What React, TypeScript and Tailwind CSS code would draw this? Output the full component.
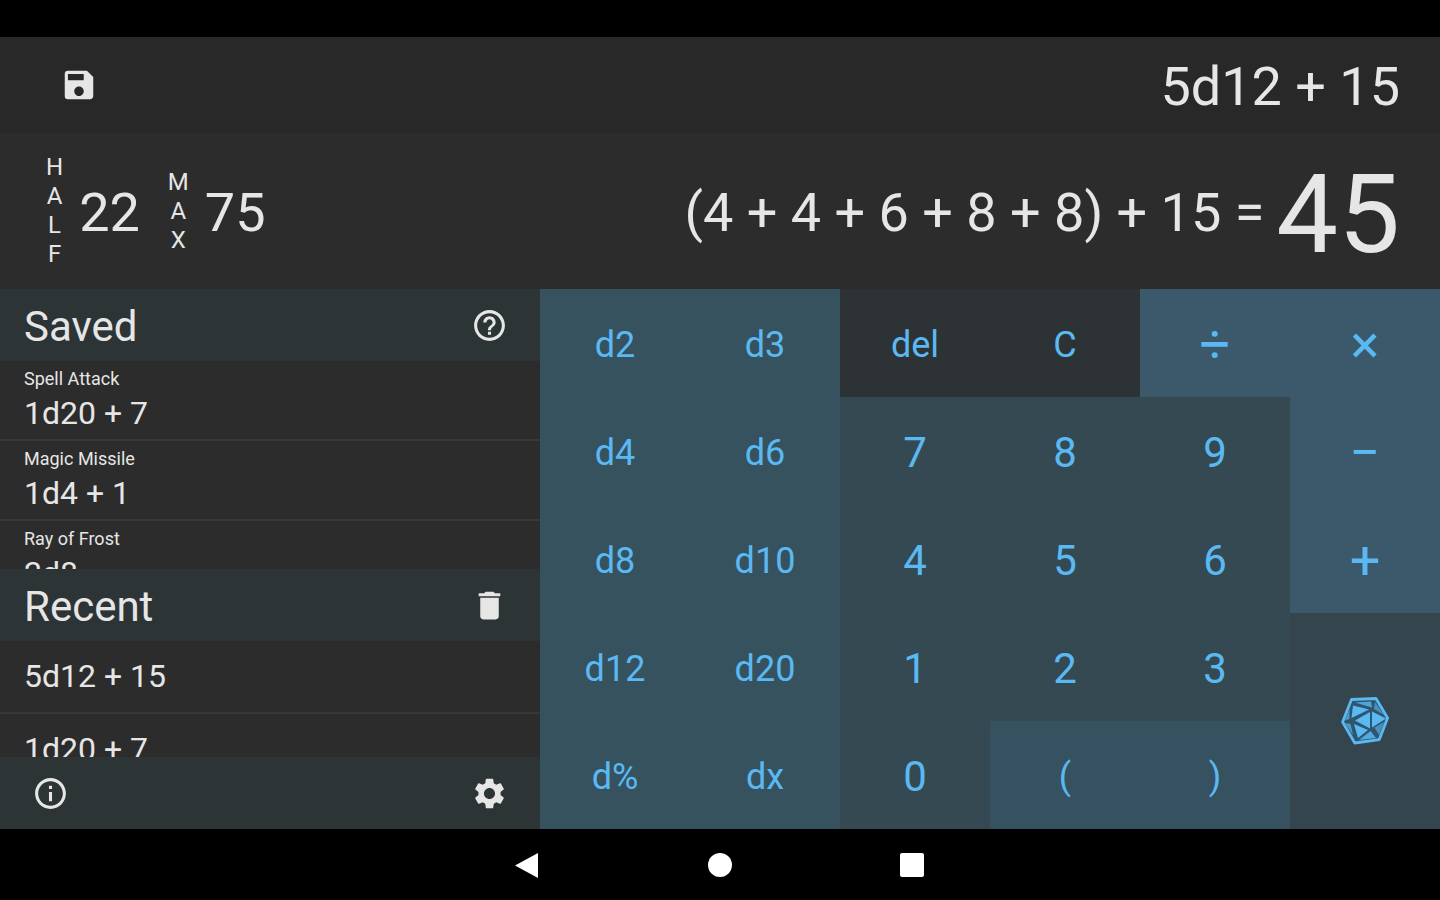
import { clsx } from 'clsx';
import { MdDelete, MdHelpOutline, MdInfoOutline, MdSave, MdSettings } from 'react-icons/md';

interface SavedRoll {
    name: string;
    formula: string;
}

interface Key {
    label: string;
    kind: 'die' | 'digit' | 'edit' | 'operator' | 'paren';
}

const savedRolls: SavedRoll[] = [
    { name: 'Spell Attack', formula: '1d20 + 7' },
    { name: 'Magic Missile', formula: '1d4 + 1' },
    { name: 'Ray of Frost', formula: '2d8' },
];

const recentRolls = ['5d12 + 15', '1d20 + 7'];

// Row by row; the roll button fills the last two cells of the right column
const keys: Key[] = [
    { label: 'd2', kind: 'die' },
    { label: 'd3', kind: 'die' },
    { label: 'del', kind: 'edit' },
    { label: 'C', kind: 'edit' },
    { label: '÷', kind: 'operator' },
    { label: '×', kind: 'operator' },
    { label: 'd4', kind: 'die' },
    { label: 'd6', kind: 'die' },
    { label: '7', kind: 'digit' },
    { label: '8', kind: 'digit' },
    { label: '9', kind: 'digit' },
    { label: '−', kind: 'operator' },
    { label: 'd8', kind: 'die' },
    { label: 'd10', kind: 'die' },
    { label: '4', kind: 'digit' },
    { label: '5', kind: 'digit' },
    { label: '6', kind: 'digit' },
    { label: '+', kind: 'operator' },
    { label: 'd12', kind: 'die' },
    { label: 'd20', kind: 'die' },
    { label: '1', kind: 'digit' },
    { label: '2', kind: 'digit' },
    { label: '3', kind: 'digit' },
    { label: 'd%', kind: 'die' },
    { label: 'dx', kind: 'die' },
    { label: '0', kind: 'digit' },
    { label: '(', kind: 'paren' },
    { label: ')', kind: 'paren' },
];

const keyStyles: Record<Key['kind'], string> = {
    die: 'bg-[#37525f] text-4xl',
    digit: 'bg-[#344952] text-[42px]',
    edit: 'bg-[#2d3335] text-4xl',
    operator: 'bg-[#3b596a] text-[54px]',
    paren: 'bg-[#365160] text-4xl',
};

function D20Icon() {
    return (
        <svg className="h-12 w-12" viewBox="0 0 48 48" fill="currentColor" aria-hidden="true">
            <path
                d="M10.5 2.5 L35 1.5 L46.6 21 L38.3 42.6 L13.8 46 L1.6 25 Z"
                fill="#2f566d"
                stroke="currentColor"
                strokeWidth="2.8"
                strokeLinejoin="round"
            />
            <path d="M12 8.5 L28 12.5 L10.500 21 Z" />
            <path d="M14 23.500 L29 15 L29 31.500 Z" />
            <path d="M31 14.500 L45 21.500 L31 30.500 Z" />
            <path d="M13 27 L27 33 L17 41 Z" />
            <path d="M14 5.500 L30 4.500 L31 10.500 Z" opacity="0.8" />
            <path d="M18 43 L29.500 34 L35 41 Z" opacity="0.85" />
            <path d="M34 5 L43 18 L33 12 Z" opacity="0.6" />
            <path d="M43 25 L38 38 L33.500 30.500 Z" opacity="0.6" />
            <path d="M8.500 12 L8.500 22 L4 23.500 Z M4 26 L9.500 27 L12 38 Z" opacity="0.7" />
        </svg>
    );
}

function Stat({ label, value }: { label: string; value: string }) {
    return (
        <div className="flex items-center gap-4">
            <div className="flex flex-col items-center text-2xl leading-[29px]">
                {label.split('').map((letter, i) => (
                    <span key={i}>{letter}</span>
                ))}
            </div>
            <span className="pt-1 text-[54px] leading-none">{value}</span>
        </div>
    );
}

function Sidebar() {
    return (
        <aside className="flex min-h-0 w-3/8 flex-col">
            <div className="flex h-18 shrink-0 items-center justify-between bg-[#2d3436] pr-8 pl-6">
                <h2 className="pt-1 text-[42px] leading-none">Saved</h2>
                <button aria-label="Help">
                    <MdHelpOutline size={37} />
                </button>
            </div>
            <ul className="min-h-0 flex-9 overflow-hidden">
                {savedRolls.map((roll) => (
                    <li key={roll.name} className="border-b-2 border-[#383838]">
                        <button className="block w-full px-6 pt-1.5 pb-1 text-left">
                            <span className="block text-lg leading-6">{roll.name}</span>
                            <span className="block text-[32px] leading-11">{roll.formula}</span>
                        </button>
                    </li>
                ))}
            </ul>

            <div className="flex h-18 shrink-0 items-center justify-between bg-[#2d3436] pr-8 pl-6">
                <h2 className="pt-1 text-[42px] leading-none">Recent</h2>
                <button aria-label="Clear recent rolls">
                    <MdDelete size={37} />
                </button>
            </div>
            <ul className="min-h-0 flex-5 overflow-hidden">
                {recentRolls.map((formula) => (
                    <li key={formula} className="border-b-2 border-[#383838]">
                        <button className="block w-full px-6 py-3 text-left text-[32px] leading-[47px]">{formula}</button>
                    </li>
                ))}
            </ul>

            <div className="flex h-18 shrink-0 items-center justify-between bg-[#2d3436] px-8">
                <button aria-label="About">
                    <MdInfoOutline size={37} />
                </button>
                <button aria-label="Settings">
                    <MdSettings size={37} />
                </button>
            </div>
        </aside>
    );
}

function Keypad() {
    return (
        <div className="grid flex-1 grid-cols-6 grid-rows-5 bg-[#34454e] text-[#5ab9f2]">
            {keys.map((key) => (
                <button key={key.label} className={clsx('flex items-center justify-center pt-1 leading-none', keyStyles[key.kind])}>
                    {key.label}
                </button>
            ))}
            <button aria-label="Roll" className="col-start-6 row-span-2 row-start-4 flex items-center justify-center bg-[#34454e]">
                <D20Icon />
            </button>
        </div>
    );
}

export default function App() {
    return (
        <div className="flex h-screen flex-col bg-black pt-[37px] font-[Roboto,sans-serif] text-[#e6e6e6]">
            {/* Current formula */}
            <header className="flex h-24 shrink-0 items-center justify-between bg-[#282828] pr-10 pl-15">
                <button aria-label="Save roll">
                    <MdSave size={38} />
                </button>
                <p className="pt-1 text-[54px] leading-none">5d12 + 15</p>
            </header>

            {/* Result */}
            <section className="flex h-39 shrink-0 items-center justify-between bg-[#2c2c2c] pr-10 pl-[46px]">
                <div className="flex items-center gap-7">
                    <Stat label="HALF" value="22" />
                    <Stat label="MAX" value="75" />
                </div>
                <div className="flex items-center gap-3 pt-1 leading-none">
                    <span className="text-[54px]">(4 + 4 + 6 + 8 + 8) + 15 =</span>
                    <span className="pt-1 text-[110px]">45</span>
                </div>
            </section>

            <main className="flex min-h-0 flex-1 bg-[#2c2c2c]">
                <Sidebar />
                <Keypad />
            </main>

            {/* System navigation */}
            <nav className="flex h-[71px] shrink-0 items-center justify-center gap-36 text-white">
                <button aria-label="Back" className="flex w-12 justify-center">
                    <svg className="h-7 w-7" viewBox="0 0 28 28" fill="currentColor">
                        <path d="M1 14.500 L24 2 V27 Z" />
                    </svg>
                </button>
                <button aria-label="Home" className="flex w-12 justify-center">
                    <span className="h-6 w-6 rounded-full bg-white" />
                </button>
                <button aria-label="Overview" className="flex w-12 justify-center">
                    <span className="h-6 w-6 rounded-xs bg-white" />
                </button>
            </nav>
        </div>
    );
}
